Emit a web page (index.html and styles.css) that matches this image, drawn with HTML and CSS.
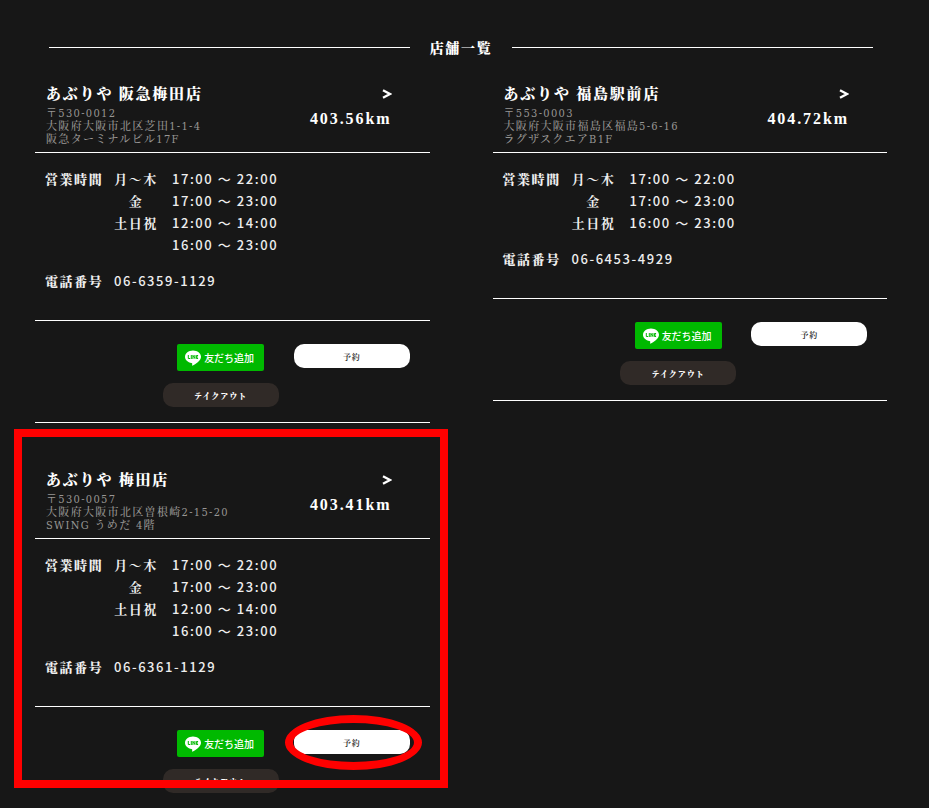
FILE: index.html
```html
<!DOCTYPE html>
<html lang="ja">
<head>
<meta charset="utf-8">
<meta name="viewport" content="width=device-width, initial-scale=1">
<title>店舗一覧</title>
<link rel="stylesheet" href="styles.css">
</head>
<body>
<svg class="defs" aria-hidden="true">
  <symbol id="line-logo" viewBox="0 0 16 16">
    <path fill="#fff" d="M8 .5C3.600.5 0 3.300 0 6.800c0 3.100 2.800 5.700 6.500 6.200.9.2.8.7.6 2.300 0 .4.3.5.7.3C10.200 14.300 16 10.900 16 6.800 16 3.300 12.400.5 8 .5z"/>
    <path fill="none" stroke="#00b900" stroke-width="1" d="M3.300 5v3.500h1.900M6.300 5v4M7.900 9V5.300l2 3.200V5M13.100 5.500h-1.700v3h1.700M11.400 7h1.600"/>
  </symbol>
  <symbol id="arrow" viewBox="0 0 10 10">
    <path fill="none" stroke="#fff" stroke-width="2.400" d="M1 1.300 8 5 1 8.700"/>
  </symbol>
</svg>
<main>
  <h1 class="heading">店舗一覧</h1>
  <div class="shops">
    <article class="shop">
      <header class="shop-head">
        <div>
          <h2 class="name">あぶりや 阪急梅田店</h2>
          <address class="address">〒530-0012<br>大阪府大阪市北区芝田1-1-4<br>阪急ターミナルビル17F</address>
        </div>
        <a class="more" href="#" aria-label="詳細"><svg class="arrow"><use href="#arrow"/></svg><span class="distance">403.56km</span></a>
      </header>
      <table class="info">
        <tr><th scope="row">営業時間</th><td class="day">月～木</td><td class="time">17:00 ～ 22:00</td></tr>
        <tr><th></th><td class="day">金</td><td class="time">17:00 ～ 23:00</td></tr>
        <tr><th></th><td class="day">土日祝</td><td class="time">12:00 ～ 14:00</td></tr>
        <tr><th></th><td class="day"></td><td class="time">16:00 ～ 23:00</td></tr>
        <tr class="phone"><th scope="row">電話番号</th><td class="time" colspan="2">06-6359-1129</td></tr>
      </table>
      <div class="actions">
        <a class="line" href="#"><svg class="logo"><use href="#line-logo"/></svg>友だち追加</a>
        <button class="pill reserve">予約</button>
        <button class="pill takeout">テイクアウト</button>
      </div>
    </article>
    <article class="shop">
      <header class="shop-head">
        <div>
          <h2 class="name">あぶりや 福島駅前店</h2>
          <address class="address">〒553-0003<br>大阪府大阪市福島区福島5-6-16<br>ラグザスクエアB1F</address>
        </div>
        <a class="more" href="#" aria-label="詳細"><svg class="arrow"><use href="#arrow"/></svg><span class="distance">404.72km</span></a>
      </header>
      <table class="info">
        <tr><th scope="row">営業時間</th><td class="day">月～木</td><td class="time">17:00 ～ 22:00</td></tr>
        <tr><th></th><td class="day">金</td><td class="time">17:00 ～ 23:00</td></tr>
        <tr><th></th><td class="day">土日祝</td><td class="time">16:00 ～ 23:00</td></tr>
        <tr class="phone"><th scope="row">電話番号</th><td class="time" colspan="2">06-6453-4929</td></tr>
      </table>
      <div class="actions">
        <a class="line" href="#"><svg class="logo"><use href="#line-logo"/></svg>友だち追加</a>
        <button class="pill reserve">予約</button>
        <button class="pill takeout">テイクアウト</button>
      </div>
    </article>
    <article class="shop marked">
      <header class="shop-head">
        <div>
          <h2 class="name">あぶりや 梅田店</h2>
          <address class="address">〒530-0057<br>大阪府大阪市北区曽根崎2-15-20<br>SWING うめだ 4階</address>
        </div>
        <a class="more" href="#" aria-label="詳細"><svg class="arrow"><use href="#arrow"/></svg><span class="distance">403.41km</span></a>
      </header>
      <table class="info">
        <tr><th scope="row">営業時間</th><td class="day">月～木</td><td class="time">17:00 ～ 22:00</td></tr>
        <tr><th></th><td class="day">金</td><td class="time">17:00 ～ 23:00</td></tr>
        <tr><th></th><td class="day">土日祝</td><td class="time">12:00 ～ 14:00</td></tr>
        <tr><th></th><td class="day"></td><td class="time">16:00 ～ 23:00</td></tr>
        <tr class="phone"><th scope="row">電話番号</th><td class="time" colspan="2">06-6361-1129</td></tr>
      </table>
      <div class="actions">
        <a class="line" href="#"><svg class="logo"><use href="#line-logo"/></svg>友だち追加</a>
        <div class="circled"><button class="pill reserve">予約</button></div>
        <button class="pill takeout">テイクアウト</button>
      </div>
    </article>
  </div>
</main>
</body>
</html>
```
FILE: styles.css
```css
* {
  box-sizing: border-box;
  letter-spacing: .12em;
}

body {
  margin: 0;
  background: #171717;
  color: #fff;
  font-family: "Noto Serif CJK JP", "Noto Sans CJK JP", serif;
}

a {
  color: inherit;
  text-decoration: none;
}

.defs {
  position: absolute;
  width: 0;
  height: 0;
}

main {
  padding: 37px 42px 0 35px;
}

.heading {
  display: flex;
  align-items: center;
  gap: 20px;
  margin: 0 14px 26px;
  font-size: 14px;
  font-weight: 900;
  line-height: 20px;
}

.heading::before,
.heading::after {
  content: "";
  flex: 1;
  height: 1px;
  background: #fff;
}

.shops {
  display: grid;
  grid-template-columns: 1fr 1fr;
  align-items: start;
  gap: 46px 63px;
}

.shop {
  border-bottom: 1px solid #fff;
}

.shop-head {
  display: flex;
  justify-content: space-between;
  padding: 0 38px 6px 11px;
  border-bottom: 1px solid #fff;
}

.name {
  margin: 0 0 4px;
  font-size: 15px;
  font-weight: 900;
  line-height: 20px;
}

.address {
  color: #989694;
  font-family: "DejaVu Serif Condensed", "Noto Serif CJK JP", serif;
  font-size: 11px;
  font-style: normal;
  font-weight: 500;
  line-height: 13px;
}

.more {
  display: flex;
  flex-direction: column;
  align-items: flex-end;
  gap: 10px;
  padding-top: 6px;
}

.arrow {
  width: 10px;
  height: 10px;
}

.distance {
  font-family: "Liberation Serif", serif;
  font-size: 16px;
  font-weight: 700;
  line-height: 20px;
}

.info {
  margin: 15px 0 28px 10px;
  border-collapse: collapse;
  color: #eee;
  font-size: 13px;
  line-height: 22px;
}

.info th,
.info td {
  height: 22px;
  padding: 0;
  text-align: left;
}

.info th {
  width: 69px;
  font-weight: 900;
}

.info .day {
  width: 58px;
  padding-right: 14px;
  font-weight: 700;
  text-align: center;
}

.info .time {
  font-family: "Noto Sans CJK JP", sans-serif;
  font-weight: 500;
}

.info .phone th,
.info .phone td {
  padding-top: 14px;
}

.actions {
  display: grid;
  grid-template-columns: 1fr 1fr;
  justify-items: center;
  align-items: start;
  row-gap: 12px;
  padding: 23px 12px 15px 120px;
  border-top: 1px solid #fff;
}

.line {
  display: flex;
  align-items: center;
  gap: 3px;
  width: 87px;
  height: 27px;
  padding-left: 8px;
  border-radius: 2px;
  background: #00b900;
  font-family: "Noto Sans CJK JP", sans-serif;
  font-size: 10px;
  font-weight: 500;
  letter-spacing: 0;
}

.logo {
  width: 16px;
  height: 16px;
}

.pill {
  width: 116px;
  height: 24px;
  padding: 0;
  border: 0;
  border-radius: 10px;
  font-family: inherit;
  font-size: 8px;
  font-weight: 600;
}

.reserve {
  background: #fff;
  color: #171717;
}

.takeout {
  background: #302a27;
  color: #fff;
  font-weight: 900;
}

.marked {
  position: relative;
  border-bottom: 0;
}

.marked::after {
  content: "";
  position: absolute;
  inset: -40px -18px 20px -21px;
  border: 8px solid #f00;
  pointer-events: none;
}

.circled {
  position: relative;
  display: flex;
}

.circled::after {
  content: "";
  position: absolute;
  inset: -15px -12px -16px -9px;
  border: 8px solid #f00;
  border-radius: 50%;
  pointer-events: none;
}
```
